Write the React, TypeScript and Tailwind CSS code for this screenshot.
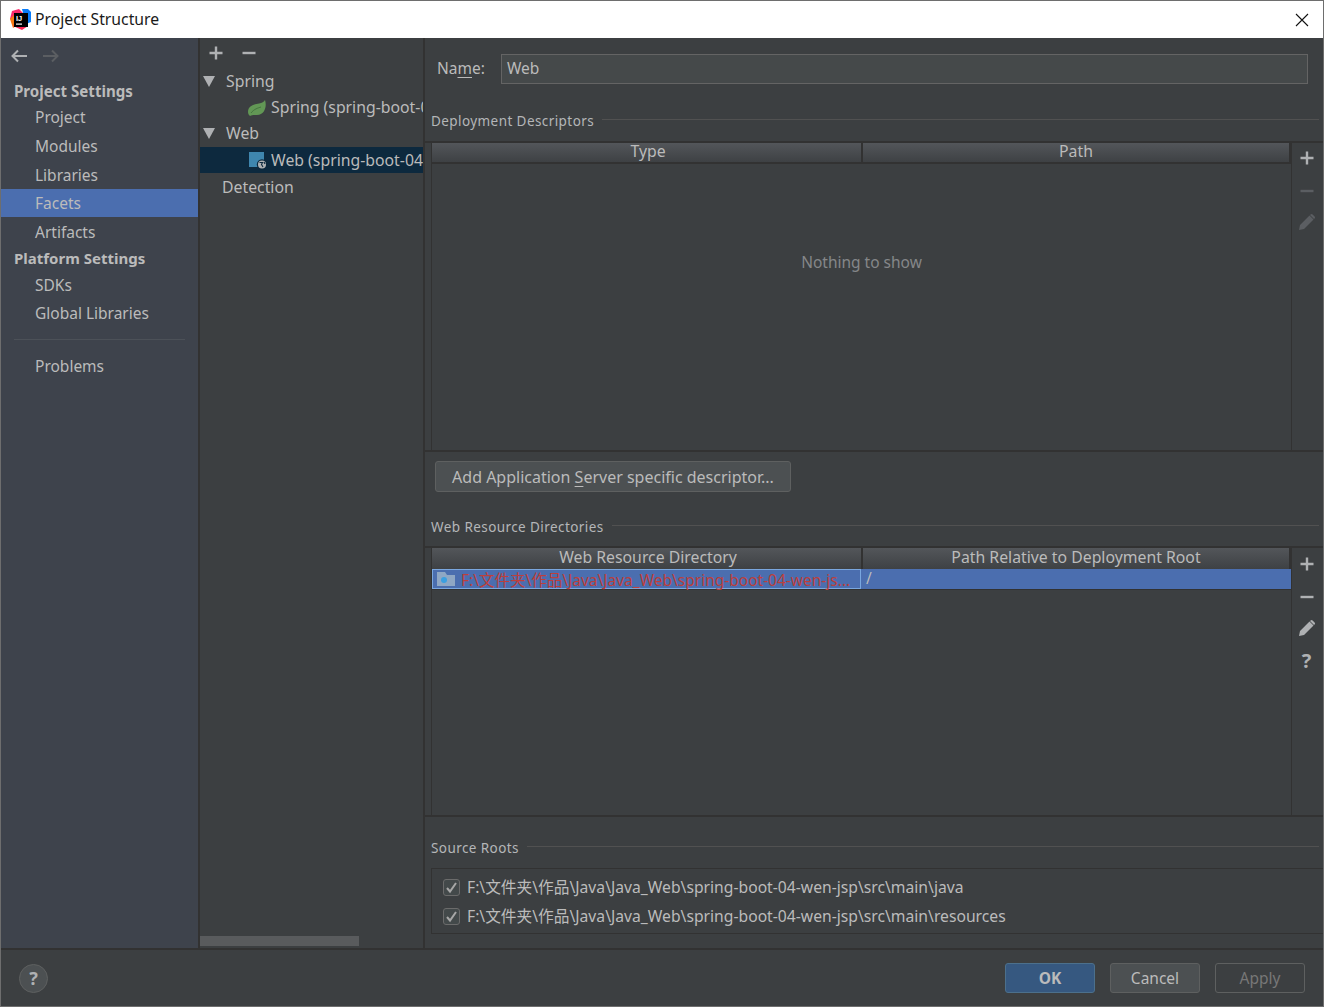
import React from "react";

const Plus = ({ c = "#afb1b3" }: { c?: string }) => (
  <svg width="14" height="14" viewBox="0 0 14 14"><path d="M5.8 0.5h2.4v5.3h5.3v2.4H8.2v5.3H5.8V8.2H0.5V5.8h5.3z" fill={c} /></svg>
);
const Minus = ({ c = "#afb1b3" }: { c?: string }) => (
  <svg width="14" height="14" viewBox="0 0 14 14"><path d="M0.5 5.8h13v2.4H0.5z" fill={c} /></svg>
);
const Pencil = ({ c = "#afb1b3" }: { c?: string }) => (
  <svg width="18" height="18" viewBox="0 0 18 18"><path d="M1 17l1-5L11.5 2.5l4 4L6 16z M12.6 1.4a1.4 1.4 0 0 1 2 0l2 2a1.4 1.4 0 0 1 0 2l-.6.6-4-4z" fill={c} /></svg>
);
const Check = () => (
  <span className="flex h-[17px] w-[17px] shrink-0 items-center justify-center rounded-[3px] border border-[#6b6b6b] bg-[#43494a]">
    <svg width="13" height="13" viewBox="0 0 13 13"><path d="M2 7l3 3.5L11 2" fill="none" stroke="#a7a7a7" strokeWidth="2" /></svg>
  </span>
);
const Tri = () => (
  <svg width="12" height="11" viewBox="0 0 12 11"><path d="M0 0h12L6 11z" fill="#afb1b3" /></svg>
);
const NavItem = ({ label, h, active, down }: { label: string; h: string; active?: boolean; down?: boolean }) => (
  <div className={`flex items-center pl-[34px] ${down ? "pt-[2px]" : ""} ${h} ${active ? "bg-[#4b6eaf]" : ""}`}>{label}</div>
);
const Section = ({ label, className }: { label: string; className: string }) => (
  <div className={`flex items-center gap-2 pl-[6px] pr-[4px] text-[13.5px] tracking-[0.42px] text-[#b4b6b8] ${className}`}>
    <span className="whitespace-nowrap">{label}</span>
    <span className="mt-[-4px] h-px flex-1 bg-[#515151]" />
  </div>
);
const HeaderCell = ({ label, className }: { label: string; className: string }) => (
  <div className={`flex h-full items-center justify-center border-r-2 border-[#323232] pb-[1px] text-[15.8px] ${className}`}>{label}</div>
);
const Tools = ({ children, className }: { children: React.ReactNode; className: string }) => (
  <div className={`flex w-[32px] shrink-0 flex-col items-center gap-[15px] border-l border-[#323232] pr-[2px] ${className}`}>{children}</div>
);
const Tool = ({ children, up }: { children: React.ReactNode; up?: boolean }) => (
  <div className={`flex h-[18px] w-[18px] items-center justify-center ${up ? "-mt-[2px]" : ""}`}>{children}</div>
);

export default function App() {
  return (
    <div
      className="flex h-[1007px] w-[1324px] flex-col overflow-hidden border border-[#6e6e6e] bg-[#3c3f41] text-[15.5px] text-[#bbbbbb]"
      style={{ fontFamily: '"Noto Sans","Noto Sans CJK SC",sans-serif' }}
    >
      <div className="flex h-[37px] shrink-0 items-center bg-white pl-[9px] pr-[14px] text-[#1a1a1a]">
        <svg width="21" height="21" viewBox="0 0 21 21" className="shrink-0">
          <path d="M2 2L9 0l4 4-9 8-4-2z" fill="#fc2a6c" />
          <path d="M0 10l4-4 2 11-3 2z" fill="#f97a12" />
          <path d="M12 0h6l3 3v10l-5 2z" fill="#087cfa" />
          <path d="M3 17l9 4 6-4-8-6z" fill="#fe2857" />
          <rect x="4" y="4" width="14" height="14" fill="#000" />
          <text x="6" y="11.5" fontSize="7.5" fontWeight="700" fill="#fff" fontFamily="Liberation Sans">IJ</text>
          <rect x="6" y="14.5" width="6" height="1.2" fill="#fff" />
        </svg>
        <span className="ml-[4px] flex-1 text-[15.75px]">Project Structure</span>
        <svg width="14" height="14" viewBox="0 0 14 14"><path d="M1 1l12 12M13 1L1 13" stroke="#111" strokeWidth="1.1" /></svg>
      </div>

      <div className="flex min-h-0 flex-1">
        <div className="flex w-[197px] shrink-0 flex-col bg-[#3e434c]">
          <div className="flex h-[40px] items-center gap-[14px] pb-[5px] pl-[9px]">
            <svg width="18" height="14" viewBox="0 0 18 14"><path d="M17 7H3M8 1.5L2.5 7 8 12.5" fill="none" stroke="#afb1b3" strokeWidth="2" /></svg>
            <svg width="18" height="14" viewBox="0 0 18 14"><path d="M1 7h14M10 1.5L15.5 7 10 12.5" fill="none" stroke="#5b5e62" strokeWidth="2" /></svg>
          </div>
          <div className="flex h-[26px] items-center pl-[13px] text-[15.1px] font-bold">Project Settings</div>
          <NavItem label="Project" h="h-[27px]" />
          <NavItem label="Modules" h="h-[30px]" down />
          <NavItem label="Libraries" h="h-[28px]" down />
          <NavItem label="Facets" h="h-[28px]" active down />
          <NavItem label="Artifacts" h="h-[30px]" down />
          <div className="flex h-[22px] items-center pl-[13px] text-[15px] font-bold">Platform Settings</div>
          <NavItem label="SDKs" h="h-[32px]" down />
          <NavItem label="Global Libraries" h="h-[24px]" down />
          <div className="ml-[13px] mr-[13px] mt-[14px] h-px bg-[#4c5158]" />
          <div className="mt-[13px] flex h-[26px] items-center pl-[34px] pt-[2px]">Problems</div>
        </div>
        <div className="w-[2px] shrink-0 bg-[#323232]" />

        <div className="flex w-[223px] shrink-0 flex-col overflow-hidden text-[15.8px]">
          <div className="flex h-[30px] items-center gap-[19px] pl-[9px]">
            <Plus />
            <Minus />
          </div>
          <div className="flex h-[27px] items-center gap-[11px] pl-[3px]"><Tri />Spring</div>
          <div className="flex h-[25px] items-center gap-[5px] whitespace-nowrap pl-[48px]">
            <svg width="18" height="16" viewBox="0 0 18 16" className="shrink-0"><path d="M0 12C0 6 6 4 11 3.5 14 3 16 2 17 0c2 6 0 15-8 15-3 0-5-.3-7 1-1-1-2-2-2-4z" fill="#629755" /><path d="M3 13C6 9 10 8 13 7" stroke="#3e6b3a" strokeWidth=".8" fill="none" /></svg>
            Spring (spring-boot-04
          </div>
          <div className="flex h-[27px] items-center gap-[11px] pl-[3px]"><Tri />Web</div>
          <div className="flex h-[26px] items-center gap-[3px] whitespace-nowrap bg-[#0d293e] pl-[49px] pt-[2px]">
            <svg width="19" height="18" viewBox="0 0 19 18" className="shrink-0">
              <rect x="0" y="0" width="15" height="15" fill="#3f86ae" />
              <circle cx="13" cy="12.5" r="5.2" fill="#0d293e" />
              <circle cx="13" cy="12.5" r="4" fill="#afb1b3" />
              <path d="M10.5 10.5h3l-1 2 1.5 2.5M15 10l1 2" stroke="#0d293e" strokeWidth="1.1" fill="none" />
            </svg>
            Web (spring-boot-04-wen
          </div>
          <div className="flex h-[30px] items-center pl-[22px]">Detection</div>
          <div className="flex-1" />
          <div className="flex h-[12px] items-start">
            <div className="h-[10px] w-[159px] bg-[#595b5d]" />
          </div>
        </div>
        <div className="w-[2px] shrink-0 bg-[#323232]" />

        <div className="flex min-w-0 flex-1 flex-col">
          <div className="mt-[16px] flex h-[30px] items-center gap-[16px] pl-[12px] pr-[15px]">
            <span>Na<span className="underline underline-offset-[3px]">m</span>e:</span>
            <div className="flex h-[30px] flex-1 items-center border border-[#646464] bg-[#45494a] pl-[5px]">Web</div>
          </div>

          <Section label="Deployment Descriptors" className="mt-[27px] h-[20px]" />
          <div className="mt-[10px] flex h-[311px] border-y-2 border-[#323232] pl-[6px]">
            <div className="flex min-w-0 flex-1 flex-col border-l border-[#323232]">
              <div className="flex h-[21px] shrink-0 border-b-2 border-[#323232] bg-gradient-to-b from-[#53565a] to-[#3e4144]">
                <HeaderCell label="Type" className="w-[431px] pl-[3px]" />
                <HeaderCell label="Path" className="flex-1" />
              </div>
              <div className="flex flex-1 items-start justify-center pt-[87px] text-[#858789]">Nothing to show</div>
            </div>
            <Tools className="pt-[6px]">
              <Tool><Plus /></Tool>
              <Tool><Minus c="#5b5e62" /></Tool>
              <Tool up><Pencil c="#5b5e62" /></Tool>
            </Tools>
          </div>

          <div className="ml-[10px] mt-[9px] flex h-[31px] w-[356px] items-center justify-center rounded-[3px] border border-[#5e6060] bg-[#4c5052] pt-[1px] text-[16px]">
            <span>Add Application <span className="underline underline-offset-[3px]">S</span>erver specific descriptor...</span>
          </div>

          <Section label="Web Resource Directories" className="mt-[25px] h-[20px]" />
          <div className="mt-[9px] flex h-[271px] border-y-2 border-[#323232] pl-[6px]">
            <div className="flex min-w-0 flex-1 flex-col border-l border-[#323232]">
              <div className="flex h-[21px] shrink-0 bg-gradient-to-b from-[#53565a] to-[#3e4144]">
                <HeaderCell label="Web Resource Directory" className="w-[431px] pl-[3px]" />
                <HeaderCell label="Path Relative to Deployment Root" className="flex-1" />
              </div>
              <div className="flex h-[21px] shrink-0 border-b border-[#323232] bg-[#4b6eaf]">
                <div className="flex h-full w-[429px] items-center gap-[5px] whitespace-nowrap border border-[#7aa7df] pl-[4px] pt-[3px] text-[15.5px] text-[#bc3f3c]">
                  <svg width="19" height="14" viewBox="0 0 19 14" className="-mt-[3px] shrink-0">
                    <path d="M0 0h8l2 3h8v11H0z" fill="#8fa7c4" />
                    <circle cx="7" cy="8" r="3" fill="#3b9fe0" />
                  </svg>
                  F:\文件夹\作品\Java\Java_Web\spring-boot-04-wen-js...
                </div>
                <div className="flex flex-1 items-center pl-[5px]">/</div>
              </div>
            </div>
            <Tools className="pt-[7px]">
              <Tool><Plus /></Tool>
              <Tool><Minus /></Tool>
              <Tool up><Pencil /></Tool>
              <Tool><span className="text-[20px] font-bold leading-none text-[#afb1b3]">?</span></Tool>
            </Tools>
          </div>

          <Section label="Source Roots" className="mt-[21px] h-[20px]" />
          <div className="ml-[6px] mt-[10px] flex h-[66px] flex-col border-y border-l border-[#323232] pl-[11px] pt-[4px] text-[15.7px]">
            <div className="flex h-[29px] items-center gap-[7px] whitespace-nowrap"><Check />F:\文件夹\作品\Java\Java_Web\spring-boot-04-wen-jsp\src\main\java</div>
            <div className="flex h-[29px] items-center gap-[7px] whitespace-nowrap"><Check />F:\文件夹\作品\Java\Java_Web\spring-boot-04-wen-jsp\src\main\resources</div>
          </div>
        </div>
      </div>

      <div className="flex h-[58px] shrink-0 items-center border-t-2 border-[#323232] pl-[18px] pr-[18px]">
        <div className="flex h-[29px] w-[29px] items-center justify-center rounded-full border border-[#5e6060] bg-[#4c5052] text-[18px] font-bold text-[#afb1b3]">?</div>
        <div className="flex-1" />
        <div className="flex h-[30px] w-[90px] items-center justify-center rounded-[3px] border border-[#4c708c] bg-[#365880] pt-[2px] font-bold">OK</div>
        <div className="ml-[15px] flex h-[30px] w-[90px] items-center justify-center rounded-[3px] border border-[#5e6060] bg-[#4c5052] pt-[2px]">Cancel</div>
        <div className="ml-[15px] flex h-[30px] w-[90px] items-center justify-center rounded-[3px] border border-[#5e6060] pt-[2px] text-[#777777]">Apply</div>
      </div>
    </div>
  );
}
